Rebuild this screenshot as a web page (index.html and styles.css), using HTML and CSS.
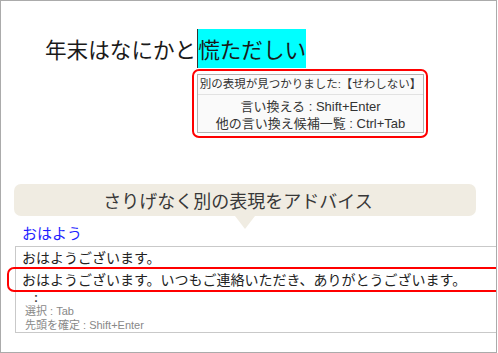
FILE: index.html
```html
<!DOCTYPE html>
<html lang="ja">
<head>
    <meta charset="UTF-8">
    <title>さりげなく別の表現をアドバイス</title>
    <link rel="stylesheet" href="styles.css">
</head>
<body>
    <div class="frame">
        <div class="editor">
            <p class="line">年末はなにかと<span class="hl">慌ただしい</span></p>
            <div class="tooltip">
                <div class="tip-box">
                    <div class="tip-head">別の表現が見つかりました:【せわしない】</div>
                    <div class="tip-body">
                        <div>言い換える : Shift+Enter</div>
                        <div>他の言い換え候補一覧 : Ctrl+Tab</div>
                    </div>
                </div>
            </div>
        </div>

        <div class="banner">さりげなく別の表現をアドバイス</div>

        <div class="input">おはよう</div>
        <div class="list">
            <div class="item">おはようございます。</div>
            <div class="item picked">おはようございます。いつもご連絡いただき、ありがとうございます。</div>
            <div class="more">:</div>
            <div class="hint">選択 : Tab</div>
            <div class="hint">先頭を確定 : Shift+Enter</div>
        </div>
    </div>
</body>
</html>
```

FILE: styles.css
```css
body { margin: 0; background: #fff; }
.frame {
    width: 495px; height: 351px;
    border: 1px solid #ababab;
    overflow: hidden;
    font-family: "Noto Sans CJK JP", "Noto Sans", sans-serif;
    color: #222;
}

/* editor line with the highlighted phrase */
.editor { padding: 28px 0 0 44px; }
.line { margin: 0; font-size: 21.6px; line-height: 39px; color: #1a1a1a; }
.hl { display: inline-block; background: #00ffff; border-left: 1px solid #333; margin-left: 1px; }

.tooltip {
    box-sizing: border-box;
    width: 236px;
    margin: 1px 0 0 147px;
    padding: 3px 2px 3px 3px;
    border: 2px solid #f00;
    border-radius: 7px;
}
.tip-box {
    border: 1px solid #b3b3b3;
    background: #fafafa;
    text-align: center;
    color: #333;
    font-family: "Liberation Sans", "Noto Sans CJK JP", sans-serif;
}
.tip-head { height: 19px; line-height: 19px; border-bottom: 1px solid #e2e2e2; font-size: 11.5px; }
.tip-body { padding-top: 3px; font-size: 13px; line-height: 17px; }

/* advice banner */
.banner {
    position: relative;
    box-sizing: border-box;
    width: 462px; height: 32px;
    margin: 46px 0 0 13px;
    padding-right: 14px;
    background: #f0ece2;
    border-radius: 7px;
    text-align: center;
    font-size: 18px; line-height: 32px;
    color: #383838;
}
.banner::after {
    content: "";
    position: absolute; left: 221px; top: 32px;
    border-left: 10px solid transparent;
    border-right: 10px solid transparent;
    border-top: 13px solid #f0ece2;
}

.input { margin: 7px 0 0 21px; font-size: 15px; line-height: 20px; color: #1f1fff; }

/* candidate list */
.list { width: 520px; margin: 3px 0 0 14px; border: 1px solid #c9c9c9; }
.item { padding-left: 6px; font-size: 14px; line-height: 20px; white-space: nowrap; }
.picked { margin-left: -9px; padding-left: 13px; border: 2px solid #f00; border-radius: 7px; line-height: 21px; }
.more, .hint { font-family: "Liberation Sans", "Noto Sans CJK JP", sans-serif; }
.more { padding-left: 18px; font-size: 12px; font-weight: bold; line-height: 12px; color: #444; }
.hint { padding-left: 9px; font-size: 11px; line-height: 14px; color: #888; }
```
